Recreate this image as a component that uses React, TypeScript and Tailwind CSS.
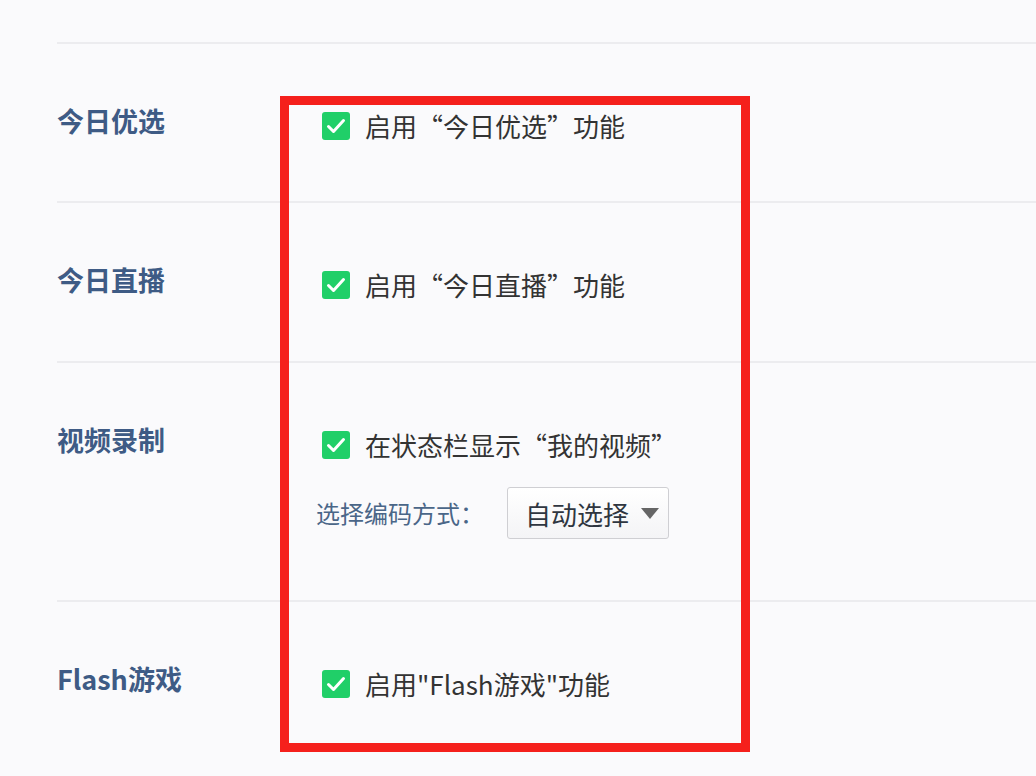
const font = "font-['Noto_Sans_CJK_SC','Noto_Sans',sans-serif]";

const CheckBox = () => (
  <span className="flex h-[28px] w-[28px] shrink-0 items-center justify-center rounded-[3px] bg-[#20cf68]">
    <svg width="22" height="22" viewBox="0 0 22 22" fill="none">
      <path d="M3.5 11.5l5 5L18.5 5.5" stroke="white" strokeWidth="3" strokeLinecap="round" strokeLinejoin="round" />
    </svg>
  </span>
);

const CheckLine = ({ label }: { label: string }) => (
  <div className="flex h-[32px] items-center">
    <CheckBox />
    <span className="ml-[15px] text-[26px] leading-none text-[#333]">{label}</span>
  </div>
);

const Row = ({ title, height, children }: { title: string; height?: string; children: React.ReactNode }) => (
  <div className={`flex border-t-2 border-[#ececef] ${height ?? ""}`}>
    <div className="w-[265px] shrink-0 pt-[61px]">
      <div className="h-[32px] text-[27px] font-bold leading-[32px] text-[#3e5b85]">{title}</div>
    </div>
    <div className="pt-[66px]">{children}</div>
  </div>
);

export default function App() {
  return (
    <div className={`relative h-[776px] w-[1036px] overflow-hidden bg-[#fafafc] ${font}`}>
      <div className="pl-[57px] pt-[42px]">
        <Row title="今日优选" height="h-[159px]">
          <CheckLine label="启用“今日优选”功能" />
        </Row>
        <Row title="今日直播" height="h-[160px]">
          <CheckLine label="启用“今日直播”功能" />
        </Row>
        <Row title="视频录制" height="h-[239px]">
          <CheckLine label="在状态栏显示“我的视频”" />
          <div className="mt-[26px] -ml-[6px] flex items-center">
            <span className="text-[24px] text-[#4a6688]">选择编码方式：</span>
            <div className="ml-[23px] flex h-[52px] w-[162px] items-center rounded-[3px] border border-[#cfcfd3] bg-gradient-to-b from-white to-[#f4f4f6] pl-[17px]">
              <span className="text-[26px] text-[#2f3640]">自动选择</span>
              <svg className="ml-[12px]" width="18" height="11" viewBox="0 0 18 11">
                <path d="M0 0h18L9 11z" fill="#666" />
              </svg>
            </div>
          </div>
        </Row>
        <Row title="Flash游戏">
          <CheckLine label={'启用"Flash游戏"功能'} />
        </Row>
      </div>
      <div className="absolute left-[280px] top-[96px] h-[656px] w-[470px] border-[9px] border-[#f5201c]" />
    </div>
  );
}
